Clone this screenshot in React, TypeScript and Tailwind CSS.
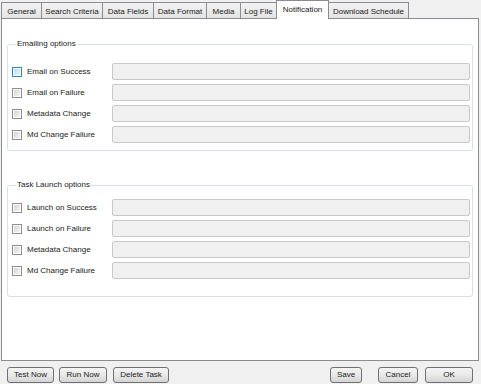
import React from 'react';

const tabs = [
  { label: 'General', w: 'w-[41px]' },
  { label: 'Search Criteria', w: 'w-[62px]' },
  { label: 'Data Fields', w: 'w-[52px]' },
  { label: 'Data Format', w: 'w-[54px]' },
  { label: 'Media', w: 'w-[35px]' },
  { label: 'Log File', w: 'w-[37px]' },
  { label: 'Notification', w: 'w-[53px]', active: true },
  { label: 'Download Schedule', w: 'w-[81px]' },
];

function CheckBox({ hot }: { hot?: boolean }) {
  return (
    <span
      className={[
        'w-[10px] h-[10px] shrink-0 border p-[1px]',
        hot ? 'border-[#3c7fb1] bg-white' : 'border-[#8e8f8f] bg-white',
      ].join(' ')}
    >
      <span
        className={[
          'block w-full h-full bg-linear-to-br',
          hot ? 'from-[#b9dcf5] to-[#eaf4fc]' : 'from-[#d4d4d4] to-[#f6f6f6]',
        ].join(' ')}
      />
    </span>
  );
}

function Row({ label, hot }: { label: string; hot?: boolean }) {
  return (
    <div className="flex items-center h-[17px]">
      <CheckBox hot={hot} />
      <span className="ml-[5px] w-[85px] shrink-0 whitespace-nowrap">{label}</span>
      <div className="flex-1 h-[17px] border border-[#c9c9c9] rounded-[2px] bg-[#f0f0f0]" />
    </div>
  );
}

function GroupBox({ title, rows, className }: { title: string; rows: string[]; className: string }) {
  return (
    <fieldset className={['border border-[#d5dfe5] rounded-[3px] pl-[4px] pr-[2px]', className].join(' ')}>
      <legend className="ml-[4px] px-[1px] leading-[10px]">{title}</legend>
      <div className="flex flex-col gap-[4px]">
        {rows.map((r, i) => (
          <Row key={r} label={r} hot={i === 0 && title.startsWith('Emailing')} />
        ))}
      </div>
    </fieldset>
  );
}

function Button({ label, w, className = '' }: { label: string; w: string; className?: string }) {
  return (
    <button
      className={[
        w,
        'h-[16px] border border-[#707070] rounded-[3px] bg-linear-to-b from-[#f4f4f4] via-[#e9e9e9] to-[#d4d4d4] leading-[14px] text-center',
        className,
      ].join(' ')}
    >
      {label}
    </button>
  );
}

export default function App() {
  return (
    <div className="w-[481px] h-[384px] bg-[#f0f0f0] text-[8px] text-[#1a1a1a] font-['Liberation_Sans',Arial,sans-serif] overflow-hidden">
      <div className="flex items-end h-[18px] pl-[1px]">
        {tabs.map((t, i) =>
          t.active ? (
            <div
              key={t.label}
              className={[
                t.w,
                '-ml-px relative z-10 h-[19px] -mb-px border border-b-0 border-[#898c95] bg-white pt-[3px] text-center whitespace-nowrap',
              ].join(' ')}
            >
              {t.label}
            </div>
          ) : (
            <div
              key={t.label}
              className={[
                t.w,
                i === 0 ? '' : '-ml-px',
                'h-[16px] border border-b-0 border-[#898c95] bg-linear-to-b from-[#f2f2f2] to-[#e4e4e4] pt-[3px] text-center whitespace-nowrap',
              ].join(' ')}
            >
              {t.label}
            </div>
          ),
        )}
      </div>
      <div className="ml-[1px] w-[478px] h-[343px] border border-[#898c95] bg-white px-[5px] pt-[20px]">
        <GroupBox
          title="Emailing options"
          rows={['Email on Success', 'Email on Failure', 'Metadata Change', 'Md Change Failure']}
          className="pt-[14px] pb-[7px]"
        />
        <GroupBox
          title="Task Launch options"
          rows={['Launch on Success', 'Launch on Failure', 'Metadata Change', 'Md Change Failure']}
          className="mt-[29px] pt-[9px] pb-[17px]"
        />
      </div>
      <div className="flex mt-[6px] pl-[7px] pr-[8px]">
        <Button label="Test Now" w="w-[47px]" />
        <Button label="Run Now" w="w-[48px]" className="ml-[5px]" />
        <Button label="Delete Task" w="w-[56px]" className="ml-[6px]" />
        <div className="flex-1" />
        <Button label="Save" w="w-[32px]" />
        <Button label="Cancel" w="w-[40px]" className="ml-[16px]" />
        <Button label="OK" w="w-[48px]" className="ml-[7px]" />
      </div>
    </div>
  );
}
